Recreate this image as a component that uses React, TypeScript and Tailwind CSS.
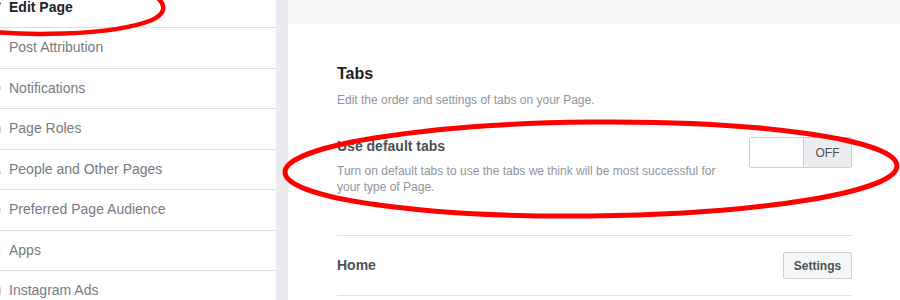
import React from 'react';
import { Pencil, Flag, Globe, Briefcase, Users, Target, LayoutGrid, Instagram } from 'lucide-react';

const navItems = [
  { label: 'Edit Page', icon: Pencil, active: true },
  { label: 'Post Attribution', icon: Flag },
  { label: 'Notifications', icon: Globe },
  { label: 'Page Roles', icon: Briefcase },
  { label: 'People and Other Pages', icon: Users },
  { label: 'Preferred Page Audience', icon: Target },
  { label: 'Apps', icon: LayoutGrid },
  { label: 'Instagram Ads', icon: Instagram },
];

export default function App() {
  return (
    <div
      className="relative w-[900px] h-[300px] overflow-hidden bg-white flex"
      style={{ fontFamily: '"Liberation Sans", Arial, Helvetica, sans-serif' }}
    >
      {/* Left settings nav */}
      <nav className="w-[276px] shrink-0 bg-white">
        <ul className="mt-[-12.5px]">
          {navItems.map(({ label, icon: Icon, active }) => (
            <li
              key={label}
              className="h-[40.5px] flex items-center border-b border-[#dddfe2]"
            >
              <Icon
                className={`ml-[-11px] mr-[8px] w-[12px] h-[12px] shrink-0 ${
                  active ? 'text-[#1d2129]' : 'text-[#b0b3b8]'
                }`}
                strokeWidth={2.5}
              />
              <span
                className={
                  active
                    ? 'text-[14px] font-bold text-[#1d2129]'
                    : 'text-[14px] text-[#777a80]'
                }
              >
                {label}
              </span>
            </li>
          ))}
        </ul>
      </nav>

      {/* Gutter */}
      <div className="w-[12px] shrink-0 bg-[#e9ebee]" />

      {/* Main panel */}
      <main className="flex-1 flex flex-col bg-white">
        <div className="h-[24px] bg-[#f6f7f9]" />

        <div className="pl-[49px] pr-[48px]">
          <h2 className="mt-[40px] text-[16px] leading-[20px] font-bold text-[#1d2129]">Tabs</h2>
          <p className="mt-[8px] text-[12px] leading-[16px] text-[#90949c]">
            Edit the order and settings of tabs on your Page.
          </p>

          <div className="mt-[29px] flex items-start justify-between">
            <div className="w-[395px]">
              <div className="text-[14px] leading-[18px] font-bold text-[#4b4f56]">Use default tabs</div>
              <p className="mt-[8px] text-[12px] leading-[16px] text-[#90949c]">
                Turn on default tabs to use the tabs we think will be most successful for your type of Page.
              </p>
            </div>
            <div className="flex h-[31px] w-[103px] rounded-[2px] border border-[#ccd0d5] overflow-hidden">
              <div className="w-[53px] bg-white" />
              <div className="flex-1 flex items-center justify-center bg-[#ebedf0] border-l border-[#ccd0d5] text-[12px] text-[#4b4f56]">
                OFF
              </div>
            </div>
          </div>

          <div className="mt-[40px] border-t border-b border-[#dddfe2] h-[61px] flex items-center justify-between">
            <span className="text-[14px] font-bold text-[#4b4f56]">Home</span>
            <button className="h-[27px] w-[69px] rounded-[2px] border border-[#ccd0d5] bg-[#f5f6f7] text-[12px] font-bold text-[#4b4f56]">
              Settings
            </button>
          </div>
        </div>
      </main>

      {/* Red hand-drawn annotations */}
      <svg
        className="absolute inset-0 pointer-events-none"
        width="900"
        height="300"
        viewBox="0 0 900 300"
        fill="none"
      >
        <path
          d="M -30 29 C 20 37, 112 36, 152 20 C 174 10, 162 -6, 132 -14"
          stroke="#ff0000"
          strokeWidth="4.5"
          strokeLinecap="round"
        />
        <ellipse cx="591" cy="169" rx="306" ry="47" stroke="#ff0000" strokeWidth="5" transform="rotate(-0.6 591 169)" />
      </svg>
    </div>
  );
}
